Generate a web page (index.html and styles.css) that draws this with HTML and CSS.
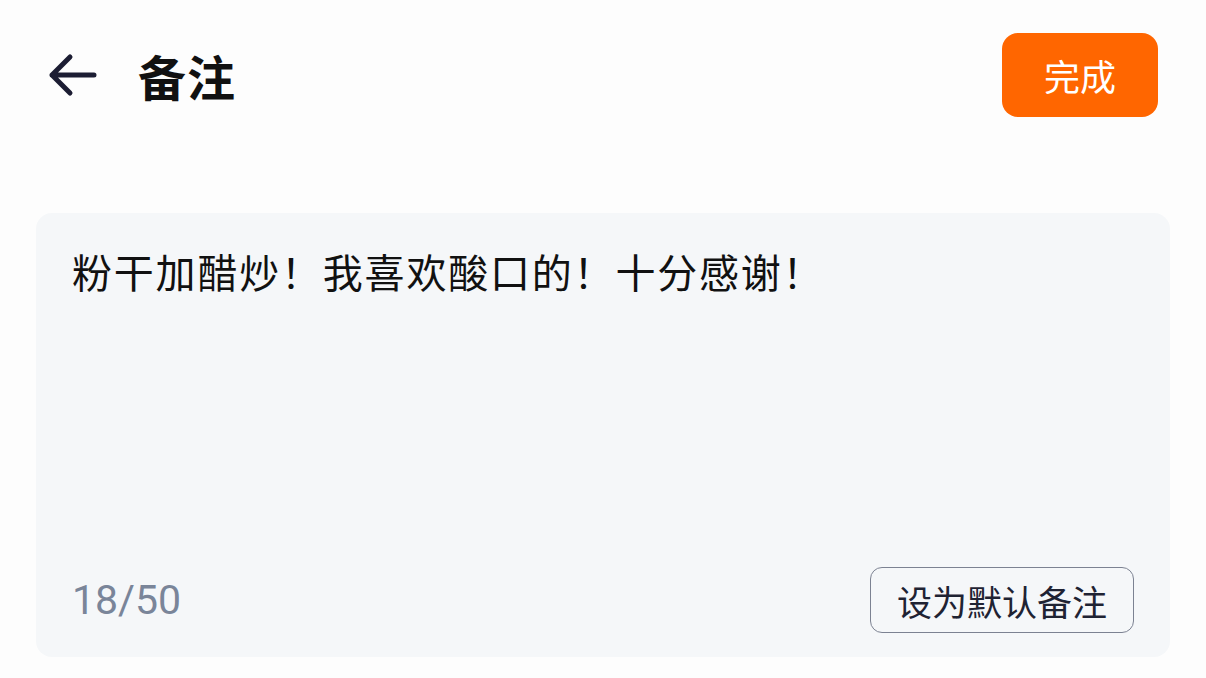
FILE: index.html
```html
<!DOCTYPE html>
<html lang="zh-CN">
<head>
<meta charset="utf-8">
<link rel="stylesheet" href="styles.css">
</head>
<body>
<div class="page">
  <header class="topbar">
    <div class="left">
      <svg class="back" width="52" height="44" viewBox="0 0 52 44"><path d="M48 22H6M24 4L6 22l18 18" fill="none" stroke="#1c1d33" stroke-width="5" stroke-linecap="round" stroke-linejoin="round"/></svg>
      <h1 class="title">备注</h1>
    </div>
    <button class="done">完成</button>
  </header>
  <section class="card">
    <p class="note">粉干加醋炒！我喜欢酸口的！十分感谢！</p>
    <div class="card-foot">
      <span class="count">18/50</span>
      <button class="default-btn">设为默认备注</button>
    </div>
  </section>
</div>
</body>
</html>
```
FILE: styles.css
```css
* { box-sizing: border-box; }
html, body { margin: 0; padding: 0; }
body {
  background: #fdfdfd;
  font-family: "Noto Sans CJK SC", "Noto Sans", sans-serif;
  width: 1206px;
  height: 678px;
  overflow: hidden;
}
.page { padding: 33px 36px 0 36px; }
.topbar {
  display: flex;
  align-items: center;
  justify-content: space-between;
  height: 84px;
  padding-right: 12px;
}
.left { display: flex; align-items: center; }
.back { margin-left: 10px; margin-right: 40px; }
.title {
  margin: 0;
  font-size: 48px;
  letter-spacing: 1px;
  font-weight: 700;
  color: #111;
  line-height: 1;
}
.done {
  width: 156px;
  height: 84px;
  border: none;
  border-radius: 16px;
  background: #ff6600;
  color: #fff;
  font-family: inherit;
  font-size: 36px;
  padding: 0;
}
.card {
  margin-top: 96px;
  height: 444px;
  background: #f5f7f9;
  border-radius: 16px;
  padding: 32px 36px 24px 36px;
  display: flex;
  flex-direction: column;
  justify-content: space-between;
}
.note {
  margin: 0;
  font-size: 40px;
  letter-spacing: 1.8px;
  line-height: 1.3;
  color: #111;
}
.card-foot {
  display: flex;
  align-items: center;
  justify-content: space-between;
}
.count {
  font-family: Roboto, "Noto Sans", sans-serif;
  font-size: 41px;
  color: #7a8599;
}
.default-btn {
  height: 66px;
  width: 264px;
  border: 1.5px solid #7c8292;
  border-radius: 12px;
  background: transparent;
  font-family: inherit;
  font-size: 35px;
  color: #1f2333;
  padding: 0;
}
```
